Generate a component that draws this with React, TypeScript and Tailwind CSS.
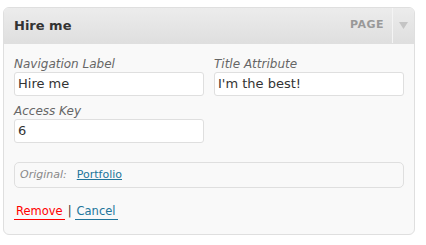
import React from "react";

export default function App() {
  const font = { fontFamily: '"DejaVu Sans", Verdana, sans-serif' };
  return (
    <div className="w-[426px] h-[245px] bg-white pt-[7px] pl-[3px]" style={font}>
      <div className="w-[412px] rounded-[6px] border border-[#dfdfdf] bg-[#f9f9f9] overflow-hidden">
        <div className="h-[36px] flex items-center bg-gradient-to-b from-[#ececec] to-[#dfdfdf] border-b border-[#dfdfdf]">
          <div className="flex-1 pl-[10px] text-[13px] font-bold text-[#333]">Hire me</div>
          <div className="text-[11px] font-bold text-[#999] pr-[8px] tracking-[0.5px]">PAGE</div>
          <div className="w-[22px] h-full border-l border-[#f4f4f4] flex items-center justify-center">
            <svg width="9" height="7" viewBox="0 0 9 7">
              <path d="M0 0 L9 0 L4.5 7 Z" fill="#c4c4c4" />
            </svg>
          </div>
        </div>
        <div className="px-[10px] pt-[13px] pb-[14px]">
          <div className="grid grid-cols-2 gap-x-[10px]">
            <div>
              <div className="text-[12px] italic text-[#666] leading-[14px]">Navigation Label</div>
              <div className="mt-[1px] h-[24px] rounded-[3px] border border-[#dfdfdf] bg-white px-[3px] flex items-center text-[13px] text-[#333]">Hire me</div>
            </div>
            <div>
              <div className="text-[12px] italic text-[#666] leading-[14px]">Title Attribute</div>
              <div className="mt-[1px] h-[24px] rounded-[3px] border border-[#dfdfdf] bg-white px-[3px] flex items-center text-[13px] text-[#333]">I'm the best!</div>
            </div>
            <div className="mt-[8px]">
              <div className="text-[12px] italic text-[#666] leading-[14px]">Access Key</div>
              <div className="mt-[1px] h-[24px] rounded-[3px] border border-[#dfdfdf] bg-white px-[3px] flex items-center text-[13px] text-[#333]">6</div>
            </div>
          </div>
          <div className="mt-[19px] h-[26px] rounded-[5px] border border-[#dfdfdf] flex items-center px-[5px] text-[11px]">
            <span className="italic text-[#888]">Original:</span>
            <a className="ml-[10px] text-[#21759b] underline">Portfolio</a>
          </div>
          <div className="mt-[15px] flex items-center text-[11.5px]">
            <a className="px-[2px] text-[#ff0000] border-b border-[#ff0000] leading-[16px]">Remove</a>
            <span className="mx-[3px] text-[#333]">|</span>
            <a className="px-[2px] text-[#21759b] border-b border-[#21759b] leading-[16px]">Cancel</a>
          </div>
        </div>
      </div>
    </div>
  );
}
